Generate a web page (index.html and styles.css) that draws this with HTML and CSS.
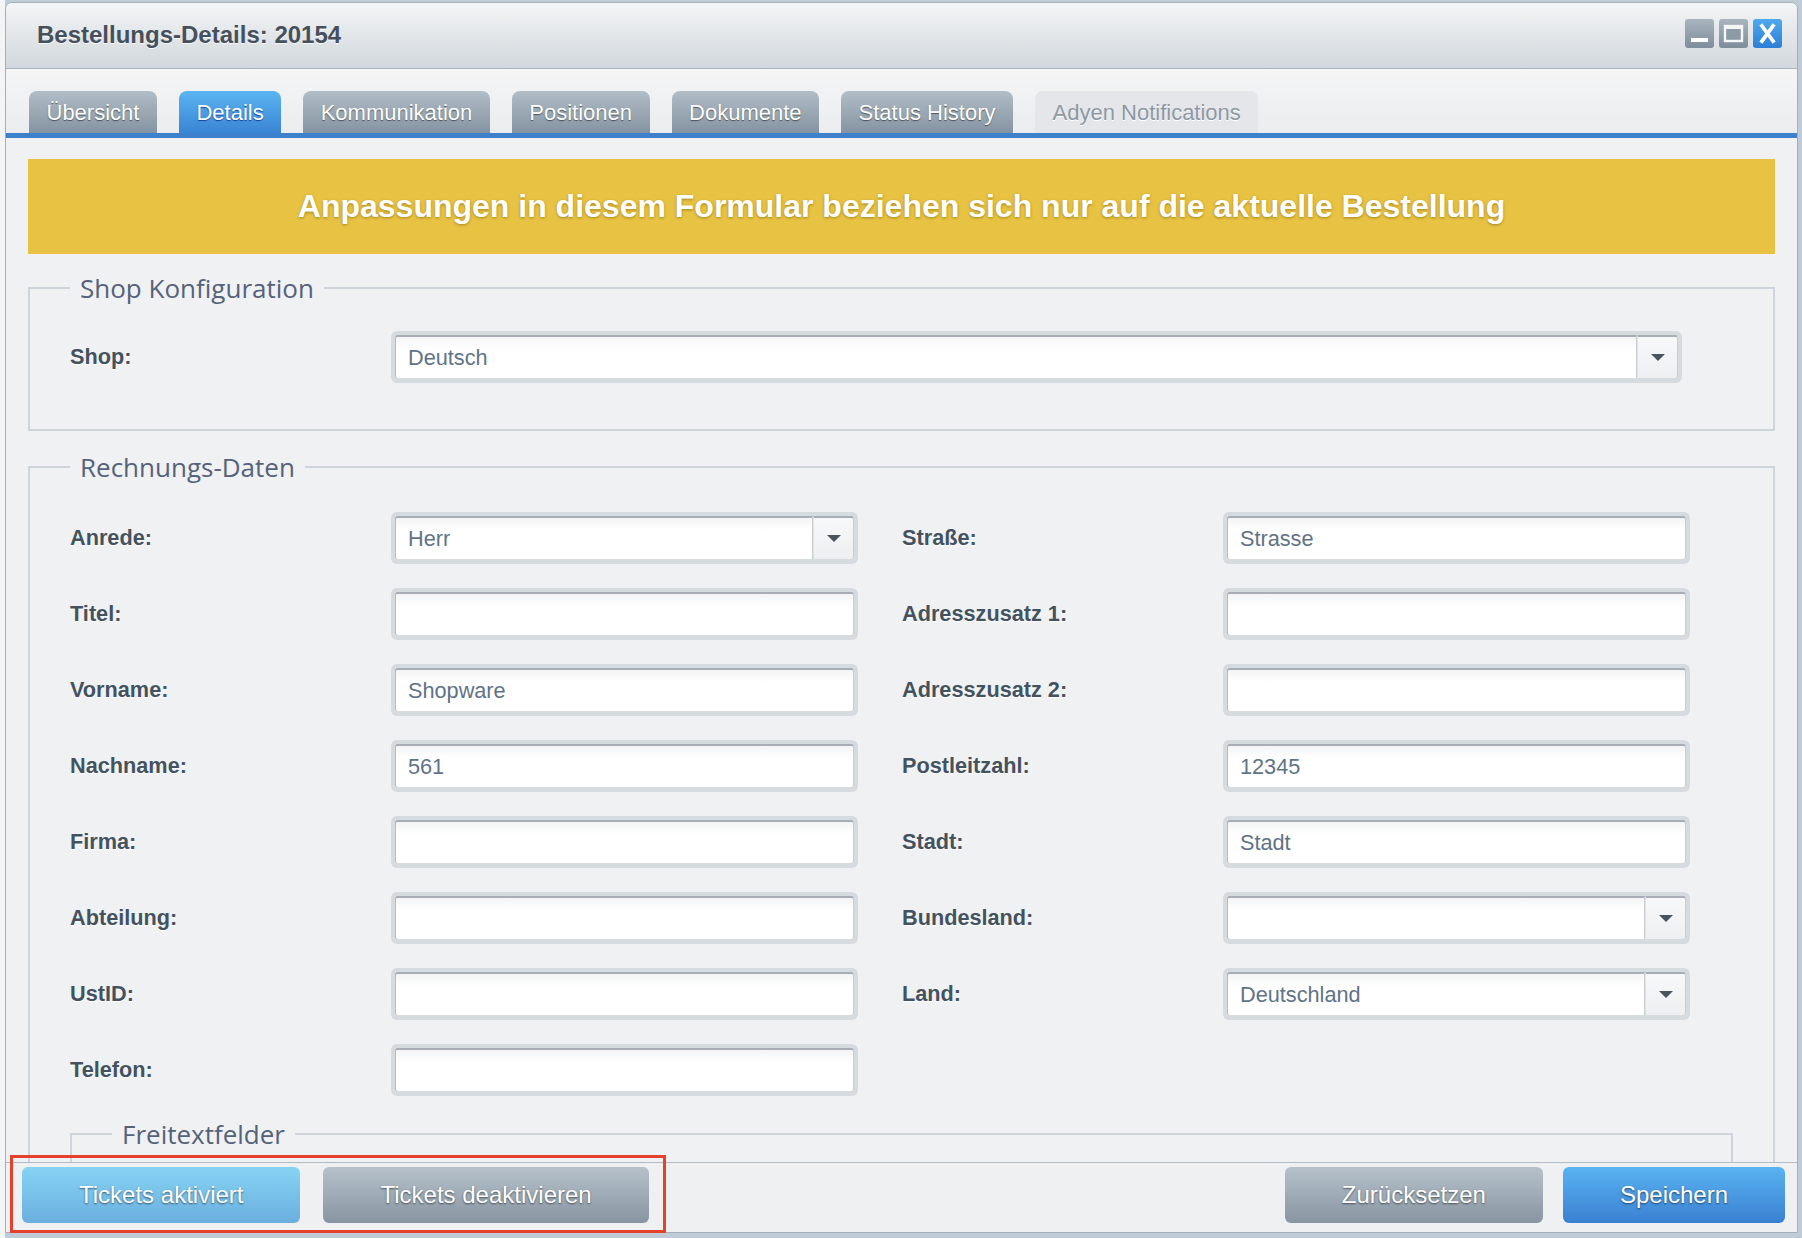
FILE: index.html
```html
<!DOCTYPE html>
<html>
<head>
    <title>Bestellungs-Details: 20154</title>
    <meta charset="utf-8">
    <link rel="stylesheet" href="styles.css">
</head>
<body>
    <div class="window">
        <div class="titlebar">
            <div class="title">Bestellungs-Details: 20154</div>
            <div class="controls">
                <svg class="tool" width="29" height="29" viewBox="0 0 29 29">
                    <defs>
                        <linearGradient id="gGray" x1="0" y1="0" x2="0" y2="1">
                            <stop offset="0" stop-color="#aab5bf"/>
                            <stop offset="1" stop-color="#7e8d9a"/>
                        </linearGradient>
                        <linearGradient id="gBlue" x1="0" y1="0" x2="0" y2="1">
                            <stop offset="0" stop-color="#4fa9ef"/>
                            <stop offset="1" stop-color="#2b7fd5"/>
                        </linearGradient>
                    </defs>
                    <rect x="0" y="0" width="29" height="29" rx="3" fill="url(#gGray)"/>
                    <rect x="6" y="19" width="17" height="4" fill="#fff"/>
                </svg>
                <svg class="tool" width="29" height="29" viewBox="0 0 29 29">
                    <rect x="0" y="0" width="29" height="29" rx="3" fill="url(#gGray)"/>
                    <rect x="6" y="7" width="17" height="15" fill="#8d9ba7" stroke="#f4f6f8" stroke-width="2.4"/>
                    <rect x="6" y="7" width="17" height="3" fill="#f4f6f8"/>
                </svg>
                <svg class="tool" width="29" height="29" viewBox="0 0 29 29">
                    <rect x="0" y="0" width="29" height="29" rx="3" fill="url(#gBlue)"/>
                    <path d="M9 7 L20 22 M20 7 L9 22" stroke="#fff" stroke-width="3.8" stroke-linecap="square"/>
                </svg>
            </div>
        </div>

        <div class="tabbar">
            <div class="tab">Übersicht</div>
            <div class="tab active">Details</div>
            <div class="tab">Kommunikation</div>
            <div class="tab">Positionen</div>
            <div class="tab">Dokumente</div>
            <div class="tab">Status History</div>
            <div class="tab disabled">Adyen Notifications</div>
        </div>

        <div class="content">
            <div class="banner">Anpassungen in diesem Formular beziehen sich nur auf die aktuelle Bestellung</div>

            <fieldset class="shop-set">
                <legend>Shop Konfiguration</legend>
                <div class="row">
                    <div class="label">Shop:</div>
                    <div class="field wide combo">
                        <div class="input">Deutsch</div>
                        <div class="trigger"></div>
                    </div>
                </div>
            </fieldset>

            <fieldset class="billing-set">
                <legend>Rechnungs-Daten</legend>
                <div class="columns">
                    <div class="column">
                        <div class="row">
                            <div class="label">Anrede:</div>
                            <div class="field combo">
                                <div class="input">Herr</div>
                                <div class="trigger"></div>
                            </div>
                        </div>
                        <div class="row">
                            <div class="label">Titel:</div>
                            <div class="field"><div class="input"></div></div>
                        </div>
                        <div class="row">
                            <div class="label">Vorname:</div>
                            <div class="field"><div class="input">Shopware</div></div>
                        </div>
                        <div class="row">
                            <div class="label">Nachname:</div>
                            <div class="field"><div class="input">561</div></div>
                        </div>
                        <div class="row">
                            <div class="label">Firma:</div>
                            <div class="field"><div class="input"></div></div>
                        </div>
                        <div class="row">
                            <div class="label">Abteilung:</div>
                            <div class="field"><div class="input"></div></div>
                        </div>
                        <div class="row">
                            <div class="label">UstID:</div>
                            <div class="field"><div class="input"></div></div>
                        </div>
                        <div class="row">
                            <div class="label">Telefon:</div>
                            <div class="field"><div class="input"></div></div>
                        </div>
                    </div>
                    <div class="column">
                        <div class="row">
                            <div class="label">Straße:</div>
                            <div class="field"><div class="input">Strasse</div></div>
                        </div>
                        <div class="row">
                            <div class="label">Adresszusatz 1:</div>
                            <div class="field"><div class="input"></div></div>
                        </div>
                        <div class="row">
                            <div class="label">Adresszusatz 2:</div>
                            <div class="field"><div class="input"></div></div>
                        </div>
                        <div class="row">
                            <div class="label">Postleitzahl:</div>
                            <div class="field"><div class="input">12345</div></div>
                        </div>
                        <div class="row">
                            <div class="label">Stadt:</div>
                            <div class="field"><div class="input">Stadt</div></div>
                        </div>
                        <div class="row">
                            <div class="label">Bundesland:</div>
                            <div class="field combo">
                                <div class="input"></div>
                                <div class="trigger"></div>
                            </div>
                        </div>
                        <div class="row">
                            <div class="label">Land:</div>
                            <div class="field combo">
                                <div class="input">Deutschland</div>
                                <div class="trigger"></div>
                            </div>
                        </div>
                    </div>
                </div>

                <fieldset class="extra-set">
                    <legend>Freitextfelder</legend>
                </fieldset>
            </fieldset>
        </div>

        <div class="footer">
            <div class="btn light">Tickets aktiviert</div>
            <div class="btn gray">Tickets deaktivieren</div>
            <div class="btn gray push">Zurücksetzen</div>
            <div class="btn primary">Speichern</div>
        </div>
    </div>

    <div class="highlight"></div>
</body>
</html>
```

FILE: styles.css
```css
* {
    box-sizing: border-box;
}
html, body {
    margin: 0;
    height: 100%;
}
body {
    font-family: "Liberation Sans", Arial, sans-serif;
    background: linear-gradient(to right, #f3f4f6 5px, #bfccd8 5px);
    overflow: hidden;
    position: relative;
}
.window {
    margin: 2px 0 0 5px;
    width: 1793px;
    height: 1231px;
    border: 1px solid #a3afbb;
    border-radius: 7px 7px 0 0;
    background: #eff1f3;
    display: flex;
    flex-direction: column;
    overflow: hidden;
}

/* title bar */
.titlebar {
    flex: none;
    height: 66px;
    display: flex;
    align-items: center;
    justify-content: space-between;
    padding: 0 15px 0 31px;
    background: linear-gradient(#f4f5f6, #d1d7dc);
    border-bottom: 1px solid #a9b4be;
}
.title {
    font-size: 24px;
    font-weight: bold;
    color: #45505b;
    text-shadow: 0 1px 0 rgba(255,255,255,0.8);
    margin-top: -1px;
}
.controls {
    display: flex;
    gap: 5px;
    margin-top: -5px;
}
.tool {
    display: block;
}

/* tabs */
.tabbar {
    flex: none;
    height: 69px;
    display: flex;
    gap: 22px;
    padding: 22px 0 0 23px;
    background: linear-gradient(#f5f5f6, #eaecee);
    border-bottom: 5px solid #3d80cc;
}
.tab {
    height: 42px;
    line-height: 44px;
    padding: 0 17.5px;
    font-size: 22px;
    color: #fff;
    border-radius: 8px 8px 0 0;
    background: linear-gradient(#b1bdc7, #8594a2);
    text-shadow: 0 1px 1px rgba(0,0,0,0.5);
}
.tab.active {
    background: linear-gradient(#5ab5f2, #3a84d4);
    text-shadow: 0 1px 1px rgba(0,40,140,0.75);
}
.tab.disabled {
    background: #e4e6e9;
    color: #8d98a4;
    text-shadow: 0 1px 0 #fff;
}

/* content */
.content {
    flex: 1;
    overflow: hidden;
    padding: 21px 22px 0 22px;
}
.banner {
    height: 95px;
    display: flex;
    align-items: center;
    justify-content: center;
    background: #e8c343;
    color: #fff;
    font-size: 32px;
    font-weight: bold;
    text-shadow: 0 1px 3px rgba(110,80,0,0.55);
}
fieldset {
    margin: 0;
    border: 2px solid #cdd4db;
    padding: 0 40px;
    min-width: 0;
}
legend {
    font-family: "Open Sans", "Liberation Sans", sans-serif;
    font-size: 26px;
    line-height: 32px;
    color: #56627a;
    padding: 0 10px;
}
.shop-set {
    margin-top: 18px;
    padding-top: 27px;
    padding-bottom: 46px;
}
.billing-set {
    margin-top: 20px;
    padding-top: 29px;
    padding-bottom: 0;
}
.extra-set {
    margin-top: 22px;
    height: 200px;
    padding: 0 40px;
}
.columns {
    display: flex;
    gap: 44px;
}
.column {
    display: flex;
    flex-direction: column;
    gap: 24px;
}
.row {
    display: flex;
    align-items: center;
}
.label {
    width: 321px;
    flex: none;
    font-size: 21.7px;
    font-weight: bold;
    color: #44525e;
    text-shadow: 0 1px 0 #fff;
}

/* inputs */
.field {
    width: 467px;
    height: 52px;
    padding: 4px 4px 5px 4px;
    background: #d6dbe0;
    border-radius: 6px;
    display: flex;
}
.field.wide {
    width: 1291px;
}
.input {
    flex: 1;
    height: 100%;
    padding: 0 12px;
    line-height: 41px;
    font-size: 21.7px;
    color: #5f7387;
    background: linear-gradient(#f3f4f5, #fff 12px);
    border-top: 2px solid #a6adb4;
    border-left: 1px solid #b4bbc2;
    border-right: 1px solid #c8ced3;
    border-radius: 3px 0 0 3px;
}
.field:not(.combo) .input {
    border-radius: 3px;
}
.trigger {
    width: 41px;
    flex: none;
    border-top: 2px solid #a6adb4;
    border-left: 1px solid #dfe3e6;
    border-right: 1px solid #c8ced3;
    border-radius: 0 3px 3px 0;
    background: linear-gradient(#f7f8f9, #edeff1);
    display: flex;
    align-items: center;
    justify-content: center;
}
.trigger::after {
    content: "";
    border-left: 7px solid transparent;
    border-right: 7px solid transparent;
    border-top: 7px solid #48535e;
}

/* footer */
.footer {
    flex: none;
    height: 70px;
    display: flex;
    gap: 23px;
    padding: 4px 12px 0 16px;
    border-top: 1px solid #b0bbc5;
    background: #eef0f2;
}
.btn {
    height: 56px;
    line-height: 56px;
    padding: 0 57px;
    border-radius: 6px;
    font-size: 24px;
    color: #fff;
    text-shadow: 0 1px 2px rgba(0,0,0,0.55);
}
.btn.light {
    background: linear-gradient(#86d3f3, #6bafe0);
}
.btn.gray {
    background: linear-gradient(#b6c1ca, #8795a2);
}
.btn.primary {
    background: linear-gradient(#59b3f1, #3a80d2);
    margin-left: -3px;
}
.btn.push {
    margin-left: auto;
}

/* annotation */
.highlight {
    position: absolute;
    left: 10px;
    top: 1155px;
    width: 656px;
    height: 78px;
    border: 3px solid #e5412c;
}
```
